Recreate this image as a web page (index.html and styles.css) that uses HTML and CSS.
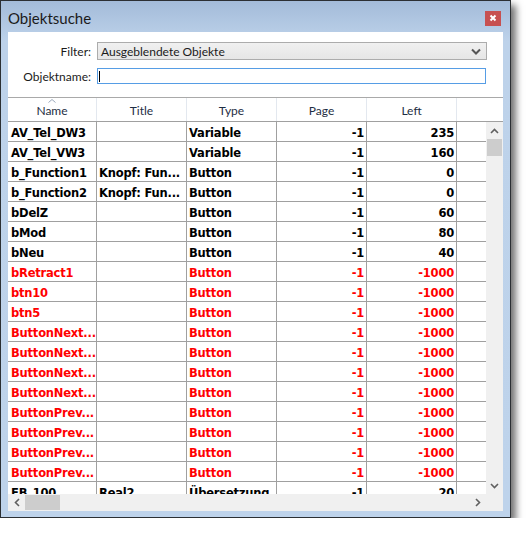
FILE: index.html
```html
<!DOCTYPE html>
<html lang="de">
<head>
    <meta charset="UTF-8">
    <title>Objektsuche</title>
    <link rel="stylesheet" href="styles.css">
</head>
<body>
    <div class="window">
        <div class="titlebar">
            <span class="title">Objektsuche</span>
            <span class="close">
                <svg width="16" height="15" viewBox="0 0 16 15"><path d="M5.5 4.5 L10.5 9.5 M10.5 4.5 L5.5 9.5" stroke="#fff" stroke-width="2" fill="none"/></svg>
            </span>
        </div>
        <div class="client">
            <div class="form">
                <div class="form-row">
                    <label>Filter:</label>
                    <div class="select">
                        <span>Ausgeblendete Objekte</span>
                        <svg width="10" height="7" viewBox="0 0 10 7"><path d="M1 1.5 L5 5.5 L9 1.5" stroke="#555" stroke-width="2" fill="none"/></svg>
                    </div>
                </div>
                <div class="form-row">
                    <label>Objektname:</label>
                    <div class="input"><span class="caret"></span></div>
                </div>
            </div>

            <div class="grid">
                <div class="grid-head">
                    <div class="hcell first">Name<svg class="sort" width="8" height="4" viewBox="0 0 8 4"><path d="M0.5 3.5 L4 0.5 L7.5 3.5" stroke="#9aa9bc" fill="none"/></svg></div>
                    <div class="hcell">Title</div>
                    <div class="hcell">Type</div>
                    <div class="hcell">Page</div>
                    <div class="hcell">Left</div>
                    <div class="hcell"></div>
                </div>
                <div class="grid-main">
                    <div class="rows">
                        <table>
                            <tr><td>AV_Tel_DW3</td><td></td><td>Variable</td><td class="num">-1</td><td class="num">235</td><td></td></tr>
                            <tr><td>AV_Tel_VW3</td><td></td><td>Variable</td><td class="num">-1</td><td class="num">160</td><td></td></tr>
                            <tr><td>b_Function1</td><td>Knopf: Fun...</td><td>Button</td><td class="num">-1</td><td class="num">0</td><td></td></tr>
                            <tr><td>b_Function2</td><td>Knopf: Fun...</td><td>Button</td><td class="num">-1</td><td class="num">0</td><td></td></tr>
                            <tr><td>bDelZ</td><td></td><td>Button</td><td class="num">-1</td><td class="num">60</td><td></td></tr>
                            <tr><td>bMod</td><td></td><td>Button</td><td class="num">-1</td><td class="num">80</td><td></td></tr>
                            <tr><td>bNeu</td><td></td><td>Button</td><td class="num">-1</td><td class="num">40</td><td></td></tr>
                            <tr class="hidden"><td>bRetract1</td><td></td><td>Button</td><td class="num">-1</td><td class="num">-1000</td><td></td></tr>
                            <tr class="hidden"><td>btn10</td><td></td><td>Button</td><td class="num">-1</td><td class="num">-1000</td><td></td></tr>
                            <tr class="hidden"><td>btn5</td><td></td><td>Button</td><td class="num">-1</td><td class="num">-1000</td><td></td></tr>
                            <tr class="hidden"><td>ButtonNext...</td><td></td><td>Button</td><td class="num">-1</td><td class="num">-1000</td><td></td></tr>
                            <tr class="hidden"><td>ButtonNext...</td><td></td><td>Button</td><td class="num">-1</td><td class="num">-1000</td><td></td></tr>
                            <tr class="hidden"><td>ButtonNext...</td><td></td><td>Button</td><td class="num">-1</td><td class="num">-1000</td><td></td></tr>
                            <tr class="hidden"><td>ButtonNext...</td><td></td><td>Button</td><td class="num">-1</td><td class="num">-1000</td><td></td></tr>
                            <tr class="hidden"><td>ButtonPrev...</td><td></td><td>Button</td><td class="num">-1</td><td class="num">-1000</td><td></td></tr>
                            <tr class="hidden"><td>ButtonPrev...</td><td></td><td>Button</td><td class="num">-1</td><td class="num">-1000</td><td></td></tr>
                            <tr class="hidden"><td>ButtonPrev...</td><td></td><td>Button</td><td class="num">-1</td><td class="num">-1000</td><td></td></tr>
                            <tr class="hidden"><td>ButtonPrev...</td><td></td><td>Button</td><td class="num">-1</td><td class="num">-1000</td><td></td></tr>
                            <tr><td>FB_100</td><td>Real2</td><td>Übersetzung</td><td class="num">-1</td><td class="num">20</td><td></td></tr>
                        </table>
                    </div>
                    <div class="vscroll">
                        <div class="arrow"><svg width="9" height="6" viewBox="0 0 9 6"><path d="M1 5 L4.5 1.5 L8 5" stroke="#606060" stroke-width="1.6" fill="none"/></svg></div>
                        <div class="vthumb"></div>
                        <div class="vtrack"></div>
                        <div class="arrow"><svg width="9" height="6" viewBox="0 0 9 6"><path d="M1 1 L4.5 4.5 L8 1" stroke="#606060" stroke-width="1.6" fill="none"/></svg></div>
                    </div>
                </div>
                <div class="grid-foot">
                    <div class="hscroll">
                        <div class="arrow"><svg width="6" height="9" viewBox="0 0 6 9"><path d="M5 1 L1.5 4.5 L5 8" stroke="#606060" stroke-width="1.6" fill="none"/></svg></div>
                        <div class="hthumb"></div>
                        <div class="htrack"></div>
                        <div class="arrow"><svg width="6" height="9" viewBox="0 0 6 9"><path d="M1 1 L4.5 4.5 L1 8" stroke="#606060" stroke-width="1.6" fill="none"/></svg></div>
                    </div>
                    <div class="corner"></div>
                </div>
            </div>
        </div>
    </div>
</body>
</html>
```

FILE: styles.css
```css
body {
    margin: 0;
    background: #fff;
    font-family: Lato, "Liberation Sans", sans-serif;
}
.window {
    width: 509px;
    height: 516px;
    border: 1px solid #2b2f33;
    background: linear-gradient(#a3bbd9, #bdd2ea 40px, #bed3eb);
    box-shadow: 5px 5px 7px rgba(0, 0, 0, 0.55);
    display: flex;
    flex-direction: column;
}
.titlebar {
    height: 31px;
    display: flex;
    align-items: flex-start;
    justify-content: space-between;
}
.title {
    margin: 8px 0 0 7px;
    font-size: 15px;
    color: #1b1b1b;
}
.close {
    width: 16px;
    height: 15px;
    margin: 10px 9px 0 0;
    background: #c75050;
    display: flex;
}
.client {
    margin: 0 7px 6px 7px;
    height: 479px;
    background: #fff;
    display: flex;
    flex-direction: column;
}
.form {
    padding: 10px 0 13px 0;
    display: flex;
    flex-direction: column;
    gap: 8px;
}
.form-row {
    display: flex;
    align-items: center;
    gap: 6px;
}
.form-row label {
    width: 83px;
    text-align: right;
    font-size: 12px;
    color: #1b1b1b;
}
.select {
    width: 380px;
    height: 16px;
    border: 1px solid #acacac;
    background: linear-gradient(#f0f0f0, #e6e6e6);
    display: flex;
    align-items: center;
    justify-content: space-between;
    padding: 0 5px 0 3px;
    font-size: 12px;
    color: #1b1b1b;
}
.input {
    width: 387px;
    height: 14px;
    border: 1px solid #569de5;
    display: flex;
    align-items: center;
}
.caret {
    width: 1px;
    height: 11px;
    margin-left: 1px;
    background: #000;
}
.grid {
    flex: 1;
    border-top: 1px solid #a9a9a9;
    display: flex;
    flex-direction: column;
    overflow: hidden;
}
.grid-head {
    height: 23px;
    border-bottom: 1px solid #a0a0a0;
    display: flex;
    flex-shrink: 0;
}
.hcell {
    width: 89px;
    flex-shrink: 0;
    border-right: 1px solid #e3e8ef;
    font-size: 12px;
    color: #1e2e44;
    text-align: center;
    line-height: 25px;
    position: relative;
}
.hcell.first {
    width: 88px;
}
.sort {
    position: absolute;
    left: 40px;
    top: 1px;
}
.grid-main {
    flex: 1;
    display: flex;
    min-height: 0;
}
.rows {
    flex: 1;
    overflow: hidden;
}
table {
    border-collapse: collapse;
    table-layout: fixed;
    width: 539px;
    font-family: "DejaVu Sans", Verdana, sans-serif;
    font-weight: bold;
    font-size: 11.5px;
    letter-spacing: -0.2px;
    color: #000;
}
td {
    width: 87px;
    padding: 4px 0 0 2px;
    line-height: 15px;
    border-right: 1px solid #a0a0a0;
    border-bottom: 1px solid #a0a0a0;
    white-space: nowrap;
    overflow: hidden;
}
td:first-child {
    width: 85px;
    padding-left: 3px;
}
td.num {
    width: 85px;
    text-align: right;
    padding-right: 2px;
}
tr.hidden td {
    color: #f00;
}
.vscroll {
    width: 17px;
    background: #f0f0f0;
    display: flex;
    flex-direction: column;
}
.vscroll .arrow {
    height: 17px;
    display: flex;
    align-items: center;
    justify-content: center;
}
.vthumb {
    height: 17px;
    margin: 0 1px;
    background: #cdcdcd;
}
.vtrack {
    flex: 1;
}
.grid-foot {
    height: 17px;
    display: flex;
    flex-shrink: 0;
    background: #f0f0f0;
}
.hscroll {
    flex: 1;
    display: flex;
}
.hscroll .arrow {
    width: 17px;
    display: flex;
    align-items: center;
    justify-content: center;
}
.hthumb {
    width: 35px;
    margin: 1px 0;
    background: #cdcdcd;
}
.htrack {
    flex: 1;
}
.corner {
    width: 17px;
}
```
